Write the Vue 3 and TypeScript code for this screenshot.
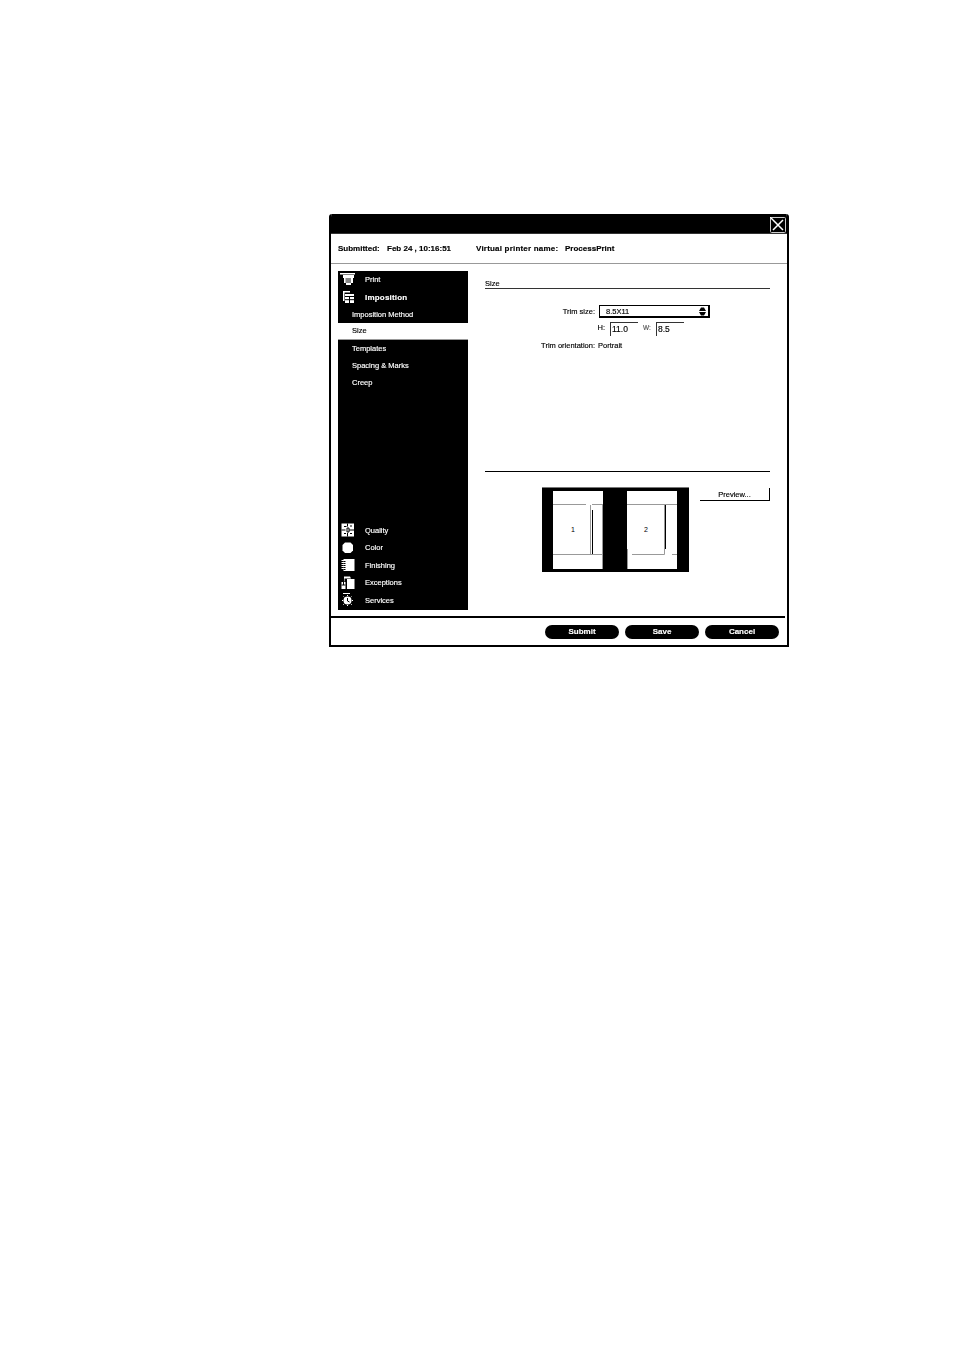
<script setup lang="ts">
const upper = [
  { label: 'Imposition Method', active: false },
  { label: 'Size', active: true },
  { label: 'Templates', active: false },
  { label: 'Spacing & Marks', active: false },
  { label: 'Creep', active: false },
]
const lower = [
  { label: 'Quality', icon: 'quality' },
  { label: 'Color', icon: 'color' },
  { label: 'Finishing', icon: 'finishing' },
  { label: 'Exceptions', icon: 'exceptions' },
  { label: 'Services', icon: 'services' },
]
const buttons = ['Submit', 'Save', 'Cancel']
</script>

<template>
  <div class="page">
    <div class="dialog">
      <header class="titlebar">
        <div class="close">
          <svg viewBox="0 0 16 16" width="16" height="16">
            <rect x="0.500" y="0.500" width="15" height="15" rx="1" fill="#000" stroke="#ccc" />
            <path d="M3 3 13 13M13 3 3 13" stroke="#fff" stroke-width="1.500" />
            <path d="M0 0 3 3" stroke="#fff" stroke-width="1.500" />
          </svg>
        </div>
      </header>
      <div class="info">
        <b class="i1">Submitted:</b><b class="i2">Feb 24 , 10:16:51</b>
        <b class="i3">Virtual printer name:</b><b class="i4">ProcessPrint</b>
      </div>
      <div class="body">
        <nav class="nav">
          <div class="head">
            <svg viewBox="0 0 16 14" width="16" height="14">
              <path d="M0 0h15v1.500H0zM3 2h11v3h-1v5h-2v2H6v-2H4V5H3z" fill="#fff" />
              <rect x="5.500" y="5" width="5.500" height="5" fill="#888" />
            </svg>
            <span>Print</span>
          </div>
          <div class="head strong">
            <svg viewBox="0 0 16 14" width="16" height="14">
              <path d="M3 1h7v1.500H3zM3 1h1.500v10H3z" fill="#fff" />
              <rect x="5" y="4" width="9" height="9" fill="#fff" />
              <path d="M5 6.500h9M9.500 6.500V13M5 9.700h9" stroke="#000" />
            </svg>
            <span>Imposition</span>
          </div>
          <div v-for="u in upper" :key="u.label" class="sub" :class="{ active: u.active }">{{ u.label }}</div>
          <div class="spacer"></div>
          <div v-for="l in lower" :key="l.label" class="head low">
            <svg viewBox="0 0 16 14" width="16" height="14">
              <template v-if="l.icon === 'quality'">
                <rect x="1.500" y="0.500" width="12.500" height="13" fill="#fff" />
                <path d="M1.500 7h4M9 7h5M7.500 0.500v3M7.500 10v3.500M4 3.500h2.500M10 3h2M4 10.500h2M10 10.500h2M7 5h2v4H7z" stroke="#000" fill="none" />
              </template>
              <path v-else-if="l.icon === 'color'" d="M5 1.500h5.500l2.500 2.500v5.500L10.500 12H5L2.500 9.500V4z" fill="#fff" />
              <template v-else-if="l.icon === 'finishing'">
                <rect x="3.500" y="1" width="11" height="12" fill="#fff" />
                <path d="M1.500 2.500h4M1.500 4.500h4M1.500 6.500h4M1.500 8.500h4M1.500 10.500h4" stroke="#fff" />
                <path d="M3.500 3.500h2M3.500 5.500h2M3.500 7.500h2M3.500 9.500h2M3.500 11.500h2" stroke="#000" />
              </template>
              <template v-else-if="l.icon === 'exceptions'">
                <path d="M4 0.500h6l1 2H4.500v3H4z" fill="#fff" />
                <rect x="7" y="3" width="7.500" height="10" fill="#fff" />
                <rect x="1.500" y="6" width="4" height="7" fill="#fff" />
                <path d="M1.500 9h4M3.500 6v3" stroke="#000" />
              </template>
              <template v-else>
                <path d="M3 0.500h7" stroke="#fff" />
                <circle cx="7.500" cy="7.500" r="4" fill="#fff" />
                <path d="M7.500 5v3l2 1" stroke="#000" fill="none" />
                <path d="M7.500 2v1.500M2 7.500h1.500M12 7.500h2M3.500 3.500l1 1M11.500 3.500l-1 1M3 12l1.500-1.500M12 12l-1.500-1.500M7.500 12v2" stroke="#fff" stroke-dasharray="1 1" />
              </template>
            </svg>
            <span>{{ l.label }}</span>
          </div>
        </nav>
        <main class="content">
          <section class="top">
            <div class="section-title">Size</div>
            <div class="form">
              <div class="row">
                <label class="lab">Trim size:</label>
                <div class="select">
                  <span>8.5X11</span>
                  <svg viewBox="0 0 7 9" width="7" height="9"><path d="M2 0.500h3L7 4H0zM0 4.900h7L5 8.500H2z" fill="#000" /></svg>
                </div>
              </div>
              <div class="row dims">
                <label class="lab h">H:</label>
                <div class="field">11.0</div>
                <span class="w">W:</span>
                <div class="field">8.5</div>
              </div>
              <div class="row orient">
                <label class="lab">Trim orientation:</label>
                <span class="val">Portrait</span>
              </div>
            </div>
          </section>
          <section class="bottom">
            <svg class="preview" viewBox="0 0 147 85" width="147" height="85">
              <rect width="147" height="85" fill="#000" />
              <path d="M0 .5h147" stroke="#777" />
              <rect x="11" y="4" width="50" height="78" fill="#fff" />
              <rect x="85" y="4" width="50" height="78" fill="#fff" />
              <path d="M11 17.500h33M50 17.500h11M48.500 18v49M11 67.500h50M60.500 17v65" stroke="#999" fill="none" />
              <path d="M50.500 23v44" stroke="#000" />
              <text x="31" y="44.500" class="pg">1</text>
              <path d="M85 17.500h50M122.500 17.500v50M90 67.500h32.500M130 67.500h5M85.500 62v20" stroke="#999" fill="none" />
              <path d="M123.500 18v44" stroke="#000" />
              <text x="104" y="44.500" class="pg">2</text>
            </svg>
            <button class="prev-btn">Preview...</button>
          </section>
        </main>
      </div>
      <footer class="footer">
        <button v-for="b in buttons" :key="b" class="pill">{{ b }}</button>
      </footer>
    </div>
  </div>
</template>

<style scoped>
.page {
  width: 954px;
  height: 1350px;
  box-sizing: border-box;
  padding: 214px 0 0 329px;
  background: #fff;
  font-family: "Liberation Sans", Arial, sans-serif;
  color: #000;
}
.dialog {
  width: 460px;
  height: 433px;
  box-sizing: border-box;
  border: 2px solid #000;
  border-top: 0;
  border-radius: 3px 3px 0 0;
  display: flex;
  flex-direction: column;
  overflow: hidden;
  filter: blur(0.3px);
  -webkit-text-stroke: 0.15px currentColor;
}
.titlebar {
  height: 19px;
  flex: none;
  background: #000;
  display: flex;
  justify-content: flex-end;
  align-items: center;
  padding-right: 1px;
  border-bottom: 1px solid #333;
}
.close { height: 16px; margin-top: 3px; }
.info {
  height: 29px;
  flex: none;
  border-bottom: 1px solid #999;
  display: flex;
  align-items: center;
  padding-left: 7px;
  font-size: 8px;
  white-space: nowrap;
}
.i1 { width: 49px; }
.i2 { width: 89px; }
.i3 { width: 89px; letter-spacing: 0.2px; }
.body {
  flex: 1;
  display: flex;
  padding: 7px 0 0 7px;
  min-height: 0;
}
.nav {
  width: 130px;
  height: 339px;
  flex: none;
  box-sizing: border-box;
  padding-bottom: 1px;
  background: #000;
  color: #fff;
  display: flex;
  flex-direction: column;
  font-size: 7.500px;
}
.head {
  height: 17.500px;
  flex: none;
  display: flex;
  align-items: center;
  padding-left: 2px;
}
.head svg { flex: none; margin-right: 9px; }
.head span { display: block; }
.strong { font-weight: 700; font-size: 8px; letter-spacing: 0.2px; }
.sub {
  height: 17px;
  flex: none;
  display: flex;
  align-items: center;
  padding-left: 14px;
}
.sub.active {
  height: 16.500px;
  background: #fff;
  color: #000;
  border-bottom: 1px solid #999;
  box-sizing: border-box;
}
.spacer { flex: 1; }
.content {
  flex: 1;
  padding: 0 17px 0 17px;
  display: flex;
  flex-direction: column;
}
.top {
  height: 201px;
  flex: none;
  border-bottom: 1px solid #000;
  box-sizing: border-box;
}
.section-title {
  height: 18px;
  box-sizing: border-box;
  padding-top: 8px;
  border-bottom: 1px solid #333;
  font-size: 7.500px;
  line-height: 9px;
}
.form {
  padding-top: 16px;
  font-size: 7.500px;
}
.row { display: flex; align-items: center; }
.lab {
  width: 113px;
  flex: none;
  text-align: right;
  padding-right: 3px;
  box-sizing: border-box;
}
.select {
  width: 111px;
  height: 13px;
  margin-left: 1px;
  box-sizing: border-box;
  border: 1px solid #000;
  border-right-width: 2px;
  border-bottom-width: 2px;
  display: flex;
  align-items: center;
  justify-content: space-between;
  padding: 0 2px 0 6px;
}
.dims {
  margin-top: 4px;
  height: 15px;
  align-items: flex-start;
}
.lab.h {
  width: 125px;
  padding-right: 5px;
  line-height: 9px;
  padding-top: 1px;
}
.field {
  width: 28px;
  height: 14px;
  box-sizing: border-box;
  border-top: 1px solid #333;
  border-left: 1px solid #333;
  padding: 2px 0 0 1px;
  font-size: 8.500px;
  line-height: 9px;
}
.w {
  width: 18px;
  text-align: center;
  color: #555;
  font-size: 6.500px;
  line-height: 9px;
  padding-top: 1px;
}
.orient { margin-top: 2px; height: 12px; }
.bottom {
  flex: 1;
  display: flex;
  align-items: flex-start;
  padding-top: 15px;
}
.preview {
  margin-left: 57px;
  flex: none;
  display: block;
}
.pg {
  font-family: "Liberation Sans", Arial, sans-serif;
  font-size: 7px;
  text-anchor: middle;
  fill: #000;
}
.prev-btn {
  margin: 1px 0 0 11px;
  width: 70px;
  height: 13px;
  padding: 0;
  background: #fff;
  border: 0;
  border-right: 1px solid #000;
  border-bottom: 1px solid #000;
  font: 7.500px "Liberation Sans", Arial, sans-serif;
  color: #000;
}
.footer {
  flex: none;
  height: 29px;
  margin-right: 2px;
  border-top: 2px solid #000;
  display: flex;
  justify-content: flex-end;
  align-items: center;
  gap: 6px;
  padding: 0 6px 0 0;
  box-sizing: border-box;
}
.pill {
  width: 74px;
  height: 14px;
  padding: 0;
  border: 0;
  border-radius: 7px;
  background: #000;
  color: #fff;
  font: 700 8px "Liberation Sans", Arial, sans-serif;
}
</style>

<style>
html, body { background: #fff; }
</style>
